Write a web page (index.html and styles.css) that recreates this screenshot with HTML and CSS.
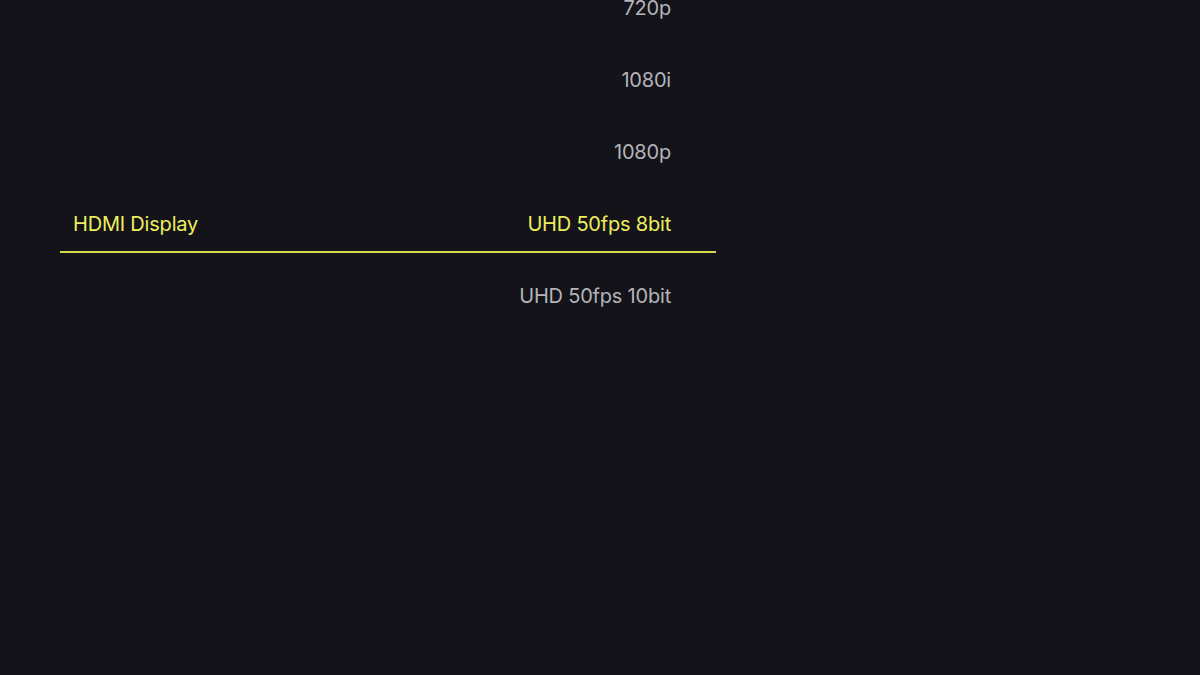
FILE: index.html
```html
<!DOCTYPE html>
<html>
<head>
<meta charset="utf-8">
<link rel="stylesheet" href="styles.css">
</head>
<body>
<div class="list">
  <div class="row"><span class="label"></span><span class="value">720p</span></div>
  <div class="row"><span class="label"></span><span class="value">1080i</span></div>
  <div class="row"><span class="label"></span><span class="value">1080p</span></div>
  <div class="row selected"><span class="label">HDMI Display</span><span class="value">UHD 50fps 8bit</span></div>
  <div class="row"><span class="label"></span><span class="value">UHD 50fps 10bit</span></div>
</div>
</body>
</html>
```
FILE: styles.css
```css
html, body {
  margin: 0;
  padding: 0;
  background: #131319;
  height: 100%;
  overflow: hidden;
}
body {
  font-family: Inter, "Noto Sans", sans-serif;
  font-size: 20px;
  letter-spacing: -0.2px;
  color: #b4b4b9;
}
.list {
  margin-left: 60px;
  width: 656px;
  margin-top: -27px;
  display: flex;
  flex-direction: column;
  gap: 8px;
}
.row {
  box-sizing: border-box;
  height: 64px;
  padding: 8px 45px 0 13px;
  border-bottom: 2px solid transparent;
  display: flex;
  align-items: center;
  justify-content: space-between;
}
.row.selected {
  color: #eeee5c;
  border-bottom-color: #d9d94e;
}
```
